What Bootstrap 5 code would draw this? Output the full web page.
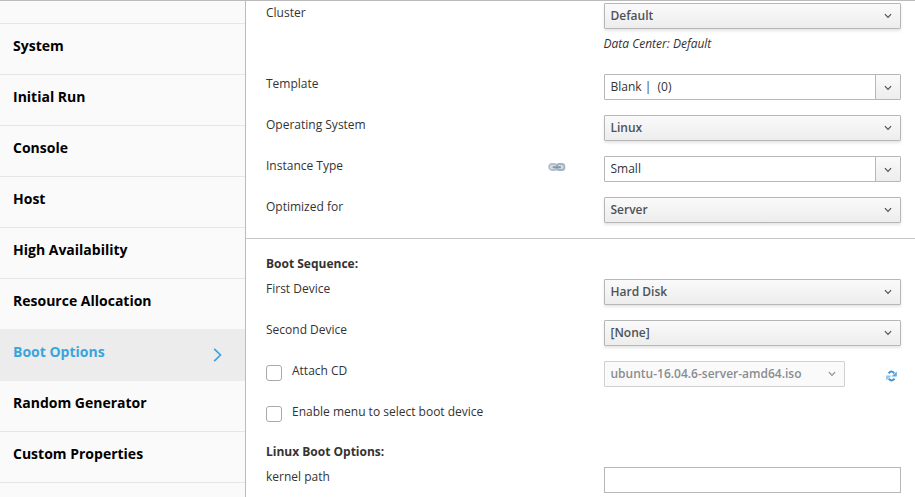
<!DOCTYPE html>
<html lang="en">
<head>
<meta charset="utf-8">
<meta name="viewport" content="width=device-width, initial-scale=1">
<title>Virtual Machine - Boot Options</title>
<link href="https://cdn.jsdelivr.net/npm/bootstrap@5.3.0/dist/css/bootstrap.min.css" rel="stylesheet">
<style>
body{font-family:"Open Sans",sans-serif;font-size:12px;line-height:18px;color:#333;background:#fff}
.dialog-body{height:497px;border-top:1px solid #bbb}
.side-tabs{width:246px;background:#fafafa;border-right:1px solid #bbb}
.side-tabs .list-group-item{height:51px;flex:none;padding:0 22px 0 13px;background:#fafafa;border:0;border-top:1px solid #e6e6e6;color:#000;font-size:14px;font-weight:700;line-height:44px}
.side-tabs .list-group-item.active{background:#ececec;border-color:#ececec;color:#39a5dc;margin:0}
.side-tabs .active+.list-group-item{border-top-color:#ececec}
.side-tabs .list-group-item.first-edge{height:22px;border-top:0}
.tab-arrow{margin-top:17px}
.form-pane{padding-top:2px}
.form-line{height:26px;margin:0 14px 15px 20px}
.form-line.cluster-line{margin-bottom:0}
.label-col{width:338px;line-height:19px}
.field-col{width:297px}
.hint{margin:5px 0 21px 357.5px;line-height:19px;height:19px}
.picker{height:26px;width:100%;padding:0 8px 0 5.5px;border:1px solid #b7b7b7;border-radius:1px;background:linear-gradient(#fafafa,#ededed);box-shadow:0 2px 3px rgba(3,3,3,.1);color:#4d5258;font-family:inherit;font-size:12px;font-weight:600;line-height:18px;text-align:left}
.picker:disabled{width:241px;background:#fafafa;border-color:#d1d1d1;color:#8b8d8f;box-shadow:none;opacity:1}
.combo .form-control,.plain-field{height:26px;min-height:26px;padding:0 6px 2px 5.5px;border:1px solid #b7b7b7;border-radius:1px 0 0 1px;color:#333;font-size:12px;line-height:18px}
.combo .btn{width:26px;height:26px;padding:2px 0 0;border:1px solid #b7b7b7;border-radius:0 1px 1px 0;background:linear-gradient(#fafafa,#ededed);color:#4d5258;line-height:1}
.section-rule{height:1px;background:#c6c6c6}
.group-title{font-weight:700;height:18px;margin:0 20px 6px}
.boot-title{margin-top:16px}
.check-box.form-check-input{width:16px;height:16px;margin:4px 10px 0 0;border:1px solid #aaa;border-radius:3px}
.link-mark{margin:5px 38px 0 0}
.reload-mark{margin:9px 4px 0 0}
</style>
</head>
<body class="overflow-hidden">
<svg class="d-none" xmlns="http://www.w3.org/2000/svg">
  <symbol id="caret" viewBox="0 0 8 6"><path d="M.9 1.1 4 4.3 7.1 1.1" fill="none" stroke="currentColor" stroke-width="1.2"/></symbol>
</svg>
<div class="dialog-body d-flex overflow-hidden">
  <nav class="side-tabs list-group list-group-flush rounded-0 flex-shrink-0">
    <div class="list-group-item first-edge"></div>
    <a class="list-group-item">System</a>
    <a class="list-group-item">Initial Run</a>
    <a class="list-group-item">Console</a>
    <a class="list-group-item">Host</a>
    <a class="list-group-item">High Availability</a>
    <a class="list-group-item">Resource Allocation</a>
    <a class="list-group-item active d-flex justify-content-between align-items-start">Boot Options
      <svg class="tab-arrow" width="10" height="16" viewBox="0 0 10 16"><path d="M1.2 1.8 7.5 8 1.2 14.2" fill="none" stroke="#39a5dc" stroke-width="1.7"/></svg></a>
    <a class="list-group-item">Random Generator</a>
    <a class="list-group-item">Custom Properties</a>
    <div class="list-group-item"></div>
  </nav>
  <main class="form-pane flex-grow-1">
    <div class="form-line cluster-line d-flex">
      <label class="label-col">Cluster</label>
      <div class="field-col"><button class="picker d-flex justify-content-between align-items-center">Default<svg width="8" height="6"><use href="#caret"/></svg></button></div>
    </div>
    <div class="hint fst-italic">Data Center: Default</div>
    <div class="form-line d-flex">
      <label class="label-col">Template</label>
      <div class="field-col combo input-group flex-nowrap"><input class="form-control" value="Blank |&nbsp; (0)"><button class="btn d-flex justify-content-center align-items-center"><svg width="8" height="6"><use href="#caret"/></svg></button></div>
    </div>
    <div class="form-line d-flex">
      <label class="label-col">Operating System</label>
      <div class="field-col"><button class="picker d-flex justify-content-between align-items-center">Linux<svg width="8" height="6"><use href="#caret"/></svg></button></div>
    </div>
    <div class="form-line d-flex">
      <div class="label-col d-flex justify-content-between align-items-start"><label>Instance Type</label>
        <svg class="link-mark" width="18" height="12" viewBox="0 0 18 12" fill="none"><rect x="1.2" y="3" width="7.6" height="6" rx="2.6" fill="#d3dde6" stroke="#b3c1cd" stroke-width="1.8"/><rect x="8.8" y="3" width="7.6" height="6" rx="2.6" fill="#d3dde6" stroke="#a3b3c0" stroke-width="1.8"/><path d="M5.5 6.2h6.6" stroke="#8497a6" stroke-width="1.9" stroke-linecap="round"/></svg></div>
      <div class="field-col combo input-group flex-nowrap"><input class="form-control" value="Small"><button class="btn d-flex justify-content-center align-items-center"><svg width="8" height="6"><use href="#caret"/></svg></button></div>
    </div>
    <div class="form-line d-flex">
      <label class="label-col">Optimized for</label>
      <div class="field-col"><button class="picker d-flex justify-content-between align-items-center">Server<svg width="8" height="6"><use href="#caret"/></svg></button></div>
    </div>
    <div class="section-rule"></div>
    <div class="group-title boot-title">Boot Sequence:</div>
    <div class="form-line d-flex">
      <label class="label-col">First Device</label>
      <div class="field-col"><button class="picker d-flex justify-content-between align-items-center">Hard Disk<svg width="8" height="6"><use href="#caret"/></svg></button></div>
    </div>
    <div class="form-line d-flex">
      <label class="label-col">Second Device</label>
      <div class="field-col"><button class="picker d-flex justify-content-between align-items-center">[None]<svg width="8" height="6"><use href="#caret"/></svg></button></div>
    </div>
    <div class="form-line d-flex">
      <div class="label-col d-flex align-items-start"><input class="form-check-input check-box" type="checkbox" id="attach"><label for="attach">Attach CD</label></div>
      <div class="field-col d-flex justify-content-between align-items-start"><button disabled class="picker d-flex justify-content-between align-items-center">ubuntu-16.04.6-server-amd64.iso<svg width="8" height="6"><use href="#caret"/></svg></button>
        <svg class="reload-mark" width="11" height="12" viewBox="0 0 11 12"><path d="M2.6 3.4Q5.4-.2 8.2 3.4" fill="none" stroke="#4a94cf" stroke-width="2"/><path d="M10.8 1.5v4.9H5.4z" fill="#62aae2"/><path d="M8.6 8.6Q5.6 12.2 2.8 8.6" fill="none" stroke="#4a94cf" stroke-width="2"/><path d="M.2 10.4V5.6h5.4z" fill="#8cc6f2"/></svg></div>
    </div>
    <div class="form-line d-flex">
      <div class="d-flex align-items-start label-col"><input class="form-check-input check-box" type="checkbox" id="menu"><label for="menu">Enable menu to select boot device</label></div>
    </div>
    <div class="group-title">Linux Boot Options:</div>
    <div class="form-line d-flex">
      <label class="label-col">kernel path</label>
      <div class="field-col"><input class="form-control plain-field rounded-0"></div>
    </div>
  </main>
</div>
<script src="https://cdn.jsdelivr.net/npm/bootstrap@5.3.0/dist/js/bootstrap.bundle.min.js"></script>
</body>
</html>
